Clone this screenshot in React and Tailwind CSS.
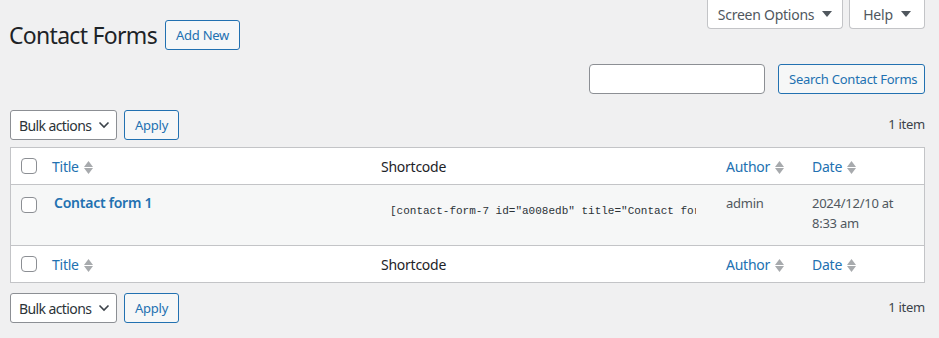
import React from "react";

const font = { fontFamily: '"Noto Sans", "Open Sans", sans-serif', letterSpacing: "-0.25px" };

function SortArrows() {
  return (
    <span className="inline-flex flex-col items-center ml-[5px] gap-[1px] pt-[2px]">
      <svg width="9" height="6" viewBox="0 0 9 6"><path d="M0 6 L4.5 0 L9 6 Z" fill="#a7aaad" /></svg>
      <svg width="9" height="6" viewBox="0 0 9 6"><path d="M0 0 L4.5 6 L9 0 Z" fill="#a7aaad" /></svg>
    </span>
  );
}

function Checkbox() {
  return <span className="block w-4 h-4 border border-[#8c8f94] rounded-[4px] bg-white" />;
}

function Btn({ children, className = "" }) {
  return (
    <button className={"h-[30px] px-[10px] border border-[#2271b1] rounded-[3px] bg-[#f6f7f7] text-[#2271b1] text-[13px] leading-none whitespace-nowrap " + className}>
      {children}
    </button>
  );
}

function Bulk() {
  return (
    <div className="flex items-center gap-[7px]">
      <div className="h-[30px] w-[107px] border border-[#8c8f94] rounded-[3px] bg-white flex items-center justify-between pl-[8px] pr-[6px] text-[14px] text-[#2c3338] whitespace-nowrap">
        <span style={{ letterSpacing: "-0.6px" }}>Bulk actions</span>
        <svg width="12" height="8" viewBox="0 0 12 8"><path d="M1.5 1.5 L6 6 L10.5 1.5" stroke="#3c434a" strokeWidth="1.6" fill="none" /></svg>
      </div>
      <Btn className="w-[55px] px-0">Apply</Btn>
    </div>
  );
}

function HeadRow({ bottom }) {
  return (
    <div className={"flex h-[37px] items-center bg-white text-[14px] whitespace-nowrap " + (bottom ? "border-t border-[#c3c4c7]" : "border-b border-[#c3c4c7]")}>
      <div className="w-[31px] pl-[10px] flex items-center"><Checkbox /></div>
      <div className="w-[329px] pl-[10px] flex items-center text-[#2271b1]">Title<SortArrows /></div>
      <div className="w-[345px] pl-[10px] text-[#1d2327]">Shortcode</div>
      <div className="w-[86px] pl-[10px] flex items-center text-[#2271b1]">Author<SortArrows /></div>
      <div className="flex-1 pl-[10px] flex items-center text-[#2271b1]">Date<SortArrows /></div>
    </div>
  );
}

export default function App() {
  return (
    <div className="w-[939px] h-[338px] bg-[#f0f0f1] overflow-hidden text-[#3c434a] text-[13px]" style={font}>
      <div className="flex justify-end pr-[14px] gap-[6px]">
        <div className="h-[29px] w-[136px] bg-white border border-[#c3c4c7] border-t-0 rounded-b-[4px] flex items-center justify-center gap-[8px] text-[14px] text-[#50575e] whitespace-nowrap">
          Screen Options
          <svg width="10" height="6" viewBox="0 0 10 6"><path d="M0 0 L10 0 L5 6 Z" fill="#50575e" /></svg>
        </div>
        <div className="h-[29px] w-[76px] bg-white border border-[#c3c4c7] border-t-0 rounded-b-[4px] flex items-center justify-center gap-[8px] text-[14px] text-[#50575e]">
          Help
          <svg width="10" height="6" viewBox="0 0 10 6"><path d="M0 0 L10 0 L5 6 Z" fill="#50575e" /></svg>
        </div>
      </div>
      <div className="flex items-center pl-[9px] mt-[-9px] gap-[8px]">
        <h1 className="text-[23px] text-[#1d2327] leading-[29px] whitespace-nowrap" style={{ letterSpacing: "-0.7px" }}>Contact Forms</h1>
        <Btn className="w-[75px] px-0">Add New</Btn>
      </div>
      <div className="flex justify-end pr-[14px] mt-[14px] gap-[13px]">
        <div className="w-[176px] h-[30px] bg-white border border-[#8c8f94] rounded-[4px]" />
        <Btn className="w-[147px] px-0">Search Contact Forms</Btn>
      </div>
      <div className="flex items-center justify-between pl-[10px] pr-[14px] mt-[16px]">
        <Bulk />
        <span className="text-[13px] text-[#3c434a]">1 item</span>
      </div>
      <div className="ml-[10px] mt-[7px] border border-[#c3c4c7] w-[915px]">
        <HeadRow />
        <div className="flex h-[60px] bg-[#f6f7f7] items-start">
          <div className="w-[31px] pl-[10px] pt-[12px]"><Checkbox /></div>
          <div className="w-[329px] pl-[12px] pt-[8px] text-[14px] font-semibold text-[#2271b1] leading-[20px] whitespace-nowrap">Contact form 1</div>
          <div className="w-[345px] pl-[19px] pt-[18px]">
            <div className="w-[306px] overflow-hidden whitespace-nowrap text-[11px] text-[#2c3338] leading-[16px]" style={{ fontFamily: '"Liberation Mono", monospace', letterSpacing: 0 }}>
              [contact-form-7 id="a008edb" title="Contact form 1"]
            </div>
          </div>
          <div className="w-[86px] pl-[10px] pt-[8px] leading-[20px] text-[#50575e]">admin</div>
          <div className="flex-1 pl-[10px] pt-[8px] leading-[20px] text-[#50575e] whitespace-nowrap">2024/12/10 at<br />8:33 am</div>
        </div>
        <HeadRow bottom />
      </div>
      <div className="flex items-center justify-between pl-[10px] pr-[14px] mt-[10px]">
        <Bulk />
        <span className="text-[13px] text-[#3c434a]">1 item</span>
      </div>
    </div>
  );
}
